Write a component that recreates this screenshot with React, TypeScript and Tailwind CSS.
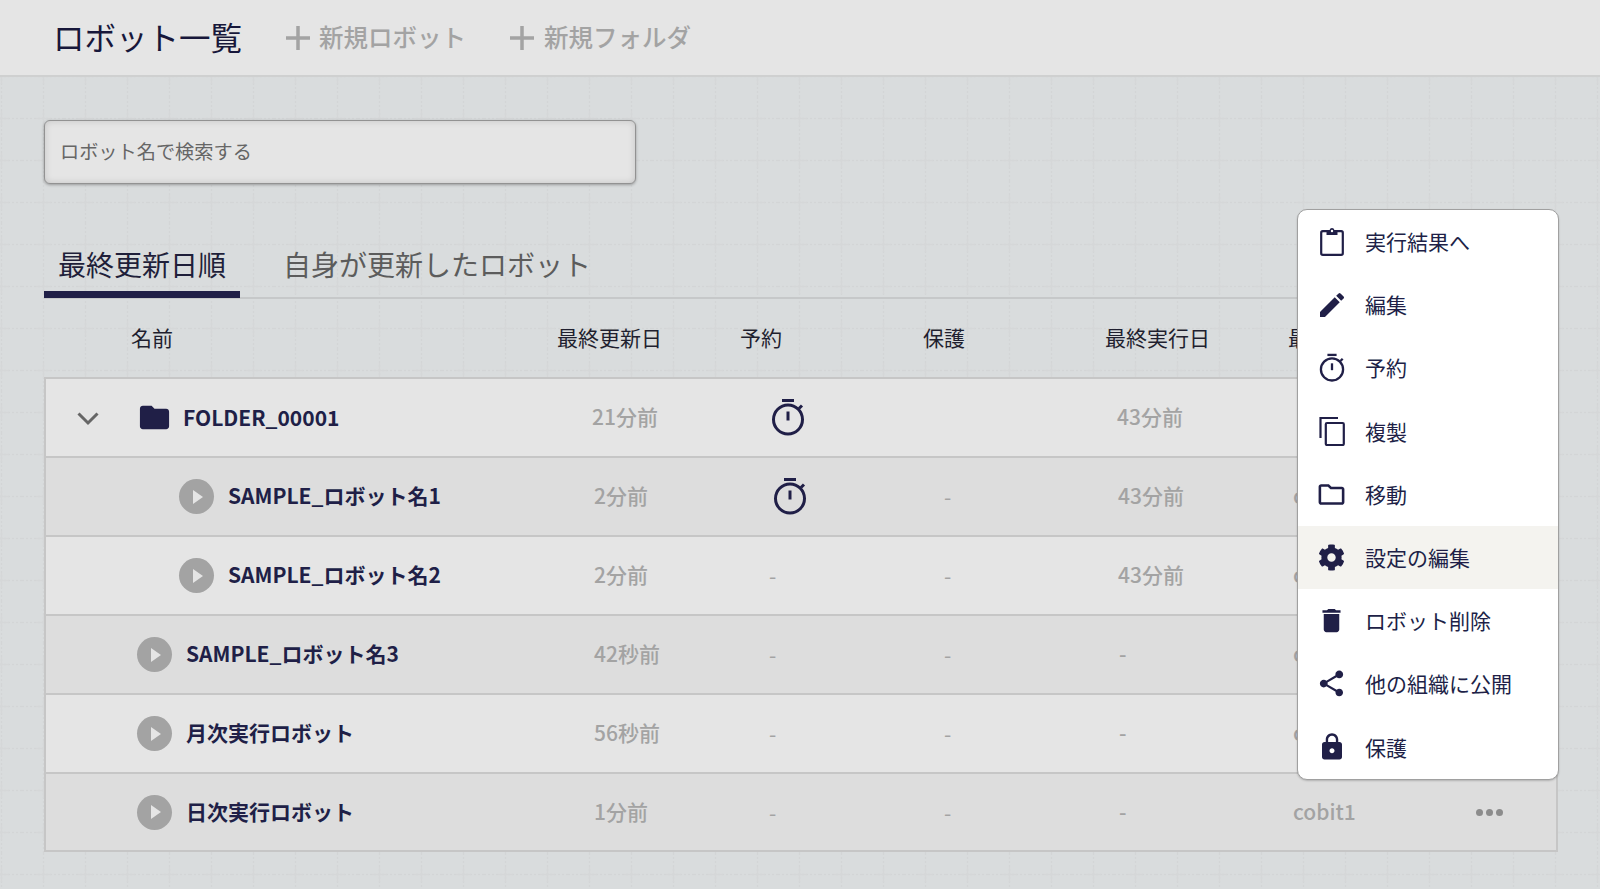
import React from "react";
import { MdEdit, MdFolder, MdOutlineFolder, MdDelete, MdShare, MdLock } from "react-icons/md";
import { FaCog } from "react-icons/fa";

const NAVY = "#201f47";

function Timer({ size = 34 }: { size?: number }) {
  return (
    <svg width={size} height={(size * 38) / 34} viewBox="0 0 34 38" fill="none" stroke={NAVY}>
      <path d="M11 2.5H23" strokeWidth="3" />
      <circle cx="17" cy="21.5" r="14.5" strokeWidth="3" />
      <path d="M17 13.5V22.5" strokeWidth="3" />
      <path d="M28 10.5L31 7.5" strokeWidth="3" />
    </svg>
  );
}

function Clipboard() {
  return (
    <svg width="24" height="29" viewBox="0 0 24 29" fill="none">
      <rect x="1.2" y="4.2" width="21.6" height="23.6" rx="1.5" stroke={NAVY} strokeWidth="2.2" />
      <path d="M6.5 8V3.5H9.5C9.8 1.8 10.8 1 12 1s2.2.8 2.5 2.5H17.5V8Z" fill={NAVY} />
      <circle cx="12" cy="4" r="1.2" fill="#fff" />
    </svg>
  );
}

function Copy() {
  return (
    <svg width="26" height="30" viewBox="0 0 26 30" fill="none" stroke={NAVY} strokeWidth="2.2">
      <path d="M1.5 22V2H19" />
      <rect x="6.8" y="7" width="18" height="22" rx="1.2" />
    </svg>
  );
}

function Plus() {
  return (
    <svg width="24" height="24" viewBox="0 0 24 24" stroke="#a3a3a3" strokeWidth="3.5" className="shrink-0">
      <path d="M12 0V24M0 12H24" />
    </svg>
  );
}

function Play() {
  return (
    <span className="flex h-[35px] w-[35px] shrink-0 items-center justify-center rounded-full bg-[#a3a3a3]">
      <svg width="12" height="16" viewBox="0 0 12 16" className="ml-[2px]">
        <path d="M1 1L11 8L1 15Z" fill="#e5e5e5" />
      </svg>
    </span>
  );
}

type Row = {
  name: string;
  folder?: boolean;
  indent?: boolean;
  updated: string;
  updatedOffset: string;
  timer?: string;
  reserve?: string;
  protect?: string;
  last: string;
  lastOffset: string;
  user?: string;
  dots?: boolean;
  height: string;
};

const rows: Row[] = [
  { name: "FOLDER_00001", folder: true, height: "h-[77px]", updated: "21分前", updatedOffset: "ml-[-2px]", timer: "ml-[-1px]", protect: "", last: "43分前", lastOffset: "ml-[-5px]" },
  { name: "SAMPLE_ロボット名1", indent: true, height: "h-[79px]", updated: "2分前", updatedOffset: "", timer: "ml-[1px]", protect: "-", last: "43分前", lastOffset: "ml-[-4px]", user: "cobit1" },
  { name: "SAMPLE_ロボット名2", indent: true, height: "h-[79px]", updated: "2分前", updatedOffset: "", reserve: "-", protect: "-", last: "43分前", lastOffset: "ml-[-4px]", user: "cobit1" },
  { name: "SAMPLE_ロボット名3", height: "h-[79px]", updated: "42秒前", updatedOffset: "", reserve: "-", protect: "-", last: "-", lastOffset: "", user: "cobit1" },
  { name: "月次実行ロボット", height: "h-[79px]", updated: "56秒前", updatedOffset: "", reserve: "-", protect: "-", last: "-", lastOffset: "", user: "cobit1" },
  { name: "日次実行ロボット", height: "h-[78px]", updated: "1分前", updatedOffset: "", reserve: "-", protect: "-", last: "-", lastOffset: "", user: "cobit1", dots: true },
];

const menu: { label: string; icon: React.ReactNode; active?: boolean }[] = [
  { label: "実行結果へ", icon: <Clipboard /> },
  { label: "編集", icon: <MdEdit size={32} color={NAVY} /> },
  { label: "予約", icon: <Timer size={26} /> },
  { label: "複製", icon: <Copy /> },
  { label: "移動", icon: <MdOutlineFolder size={31} color={NAVY} /> },
  { label: "設定の編集", icon: <FaCog size={27} color={NAVY} />, active: true },
  { label: "ロボット削除", icon: <MdDelete size={31} color={NAVY} /> },
  { label: "他の組織に公開", icon: <MdShare size={31} color={NAVY} /> },
  { label: "保護", icon: <MdLock size={30} color={NAVY} /> },
];

export default function App() {
  return (
    <div className="flex h-[889px] w-full flex-col overflow-hidden bg-[#d9dcdd] font-['Noto_Sans_CJK_JP','Noto_Sans',sans-serif] text-[#201f47]">
      <header className="flex h-[77px] shrink-0 items-center border-b-2 border-[#cfd0d0] bg-[#e5e5e5] pl-[53px]">
        <h1 className="w-[233px] pb-[2px] text-[31.5px] font-normal leading-none text-[#17173a]">ロボット一覧</h1>
        <div className="flex w-[224px] items-center gap-[9px] text-[#a3a3a3]">
          <Plus />
          <span className="text-[24.5px] font-medium leading-none">新規ロボット</span>
        </div>
        <div className="flex items-center gap-[10px] text-[#a3a3a3]">
          <Plus />
          <span className="text-[24.5px] font-medium leading-none">新規フォルダ</span>
        </div>
      </header>

      <main className="relative flex flex-1 flex-col bg-[url(data:image/svg+xml,%3Csvg%20xmlns=%27http://www.w3.org/2000/svg%27%20width=%2742%27%20height=%2742%27%3E%3Cpath%20d=%27M21.5%200V42M0%2021.5H42%27%20stroke=%27%23d3d5d6%27%20stroke-width=%271.5%27%20stroke-dasharray=%272%202%27/%3E%3Cpath%20d=%27M21.5%2014V29M14%2021.5H29%27%20stroke=%27%23d5d7d8%27%20stroke-width=%271.5%27/%3E%3C/svg%3E)] bg-[position:22px_20px] pl-[44px] pr-[42px] pt-[43px]">
        <div className="flex h-[64px] w-[592px] items-center rounded-[6px] border-[1.5px] border-[#929292] bg-[#e5e5e5] pb-[2px] pl-[15px] text-[19.2px] text-[#666666] shadow-[inset_0_0_7px_rgba(0,0,0,0.14),0_1px_3px_rgba(0,0,0,0.3)]">
          ロボット名で検索する
        </div>

        <div className="mt-[53px] flex h-[62px] border-b-2 border-[#c6c8c9]">
          <div className="flex h-[61px] w-[196px] items-center border-b-[7px] border-[#201f47] pl-[14px] text-[28px] leading-none text-[#1f1f3a]">
            最終更新日順
          </div>
          <div className="flex h-[54px] items-center pl-[43px] text-[28px] leading-none text-[#5c5c5c]">
            自身が更新したロボット
          </div>
        </div>

        <div className="flex h-[78px] items-center pb-[1px] text-[21px] leading-none text-[#1f1f2f]">
          <div className="w-[513px] pl-[87px]">名前</div>
          <div className="w-[183px]">最終更新日</div>
          <div className="w-[183px]">予約</div>
          <div className="w-[182px]">保護</div>
          <div className="w-[183px]">最終実行日</div>
          <div>最終実行者</div>
        </div>

        <div className="border-2 border-[#c6c6c6]">
          {rows.map((r, i) => (
            <div
              key={r.name}
              className={`flex items-center border-[#c6c6c6] ${r.height} ${i > 0 ? "border-t-2" : ""} ${i % 2 === 0 ? "bg-[#e5e5e5]" : "bg-[#dddddd]"}`}
            >
              <div className="flex w-[548px] items-center text-[21px] font-bold leading-none">
                {r.folder ? (
                  <>
                    <svg width="22" height="14" viewBox="0 0 22 14" fill="none" stroke="#666666" strokeWidth="3" className="ml-[31px] mt-[2px]">
                      <path d="M1.5 1.5L11 11L20.5 1.5" />
                    </svg>
                    <MdFolder size={35} color={NAVY} className="ml-[38px]" />
                    <span className="ml-[11px]">{r.name}</span>
                  </>
                ) : (
                  <>
                    <span className={r.indent ? "ml-[133px]" : "ml-[91px]"}>
                      <Play />
                    </span>
                    <span className="ml-[14px] pb-[2px]">{r.name}</span>
                  </>
                )}
              </div>
              <div className="w-[178px] pb-[2px] text-[21px] font-medium leading-none text-[#a3a3a3]">
                <span className={`inline-block ${r.updatedOffset}`}>{r.updated}</span>
              </div>
              <div className="w-[175px] text-[21px] leading-none text-[#a3a3a3]">
                {r.timer ? (
                  <span className={`block w-[34px] pb-[2px] ${r.timer}`}>
                    <Timer />
                  </span>
                ) : (
                  <span className="ml-[-3px]">{r.reserve}</span>
                )}
              </div>
              <div className="w-[175px] text-[21px] leading-none text-[#a3a3a3]">
                <span className="ml-[-3px]">{r.protect}</span>
              </div>
              <div className="w-[171px] pb-[2px] text-[21px] font-medium leading-none text-[#a3a3a3]">
                <span className={`inline-block ${r.last === "-" ? "ml-[-3px]" : r.lastOffset}`}>{r.last}</span>
              </div>
              <div className="w-[182px] pb-[2px] text-[21px] font-medium leading-none text-[#a3a3a3]">{r.user}</div>
              {r.dots && (
                <div className="ml-[1px] flex gap-[3px]">
                  <span className="h-[7px] w-[7px] rounded-full bg-[#8c8c8c]" />
                  <span className="h-[7px] w-[7px] rounded-full bg-[#8c8c8c]" />
                  <span className="h-[7px] w-[7px] rounded-full bg-[#8c8c8c]" />
                </div>
              )}
            </div>
          ))}
        </div>

        <div className="absolute left-[1297px] top-[132px] w-[262px] overflow-hidden rounded-[10px] border-[1.5px] border-[#a0a0a0] bg-white shadow-[0_1px_2px_rgba(0,0,0,0.2)]">
          {menu.map((m) => (
            <div key={m.label} className={`flex h-[63.2px] items-center text-[21px] leading-none ${m.active ? "bg-[#f4f3ef]" : ""}`}>
              <span className="flex w-[67px] shrink-0 justify-center">{m.icon}</span>
              {m.label}
            </div>
          ))}
        </div>
      </main>
    </div>
  );
}
